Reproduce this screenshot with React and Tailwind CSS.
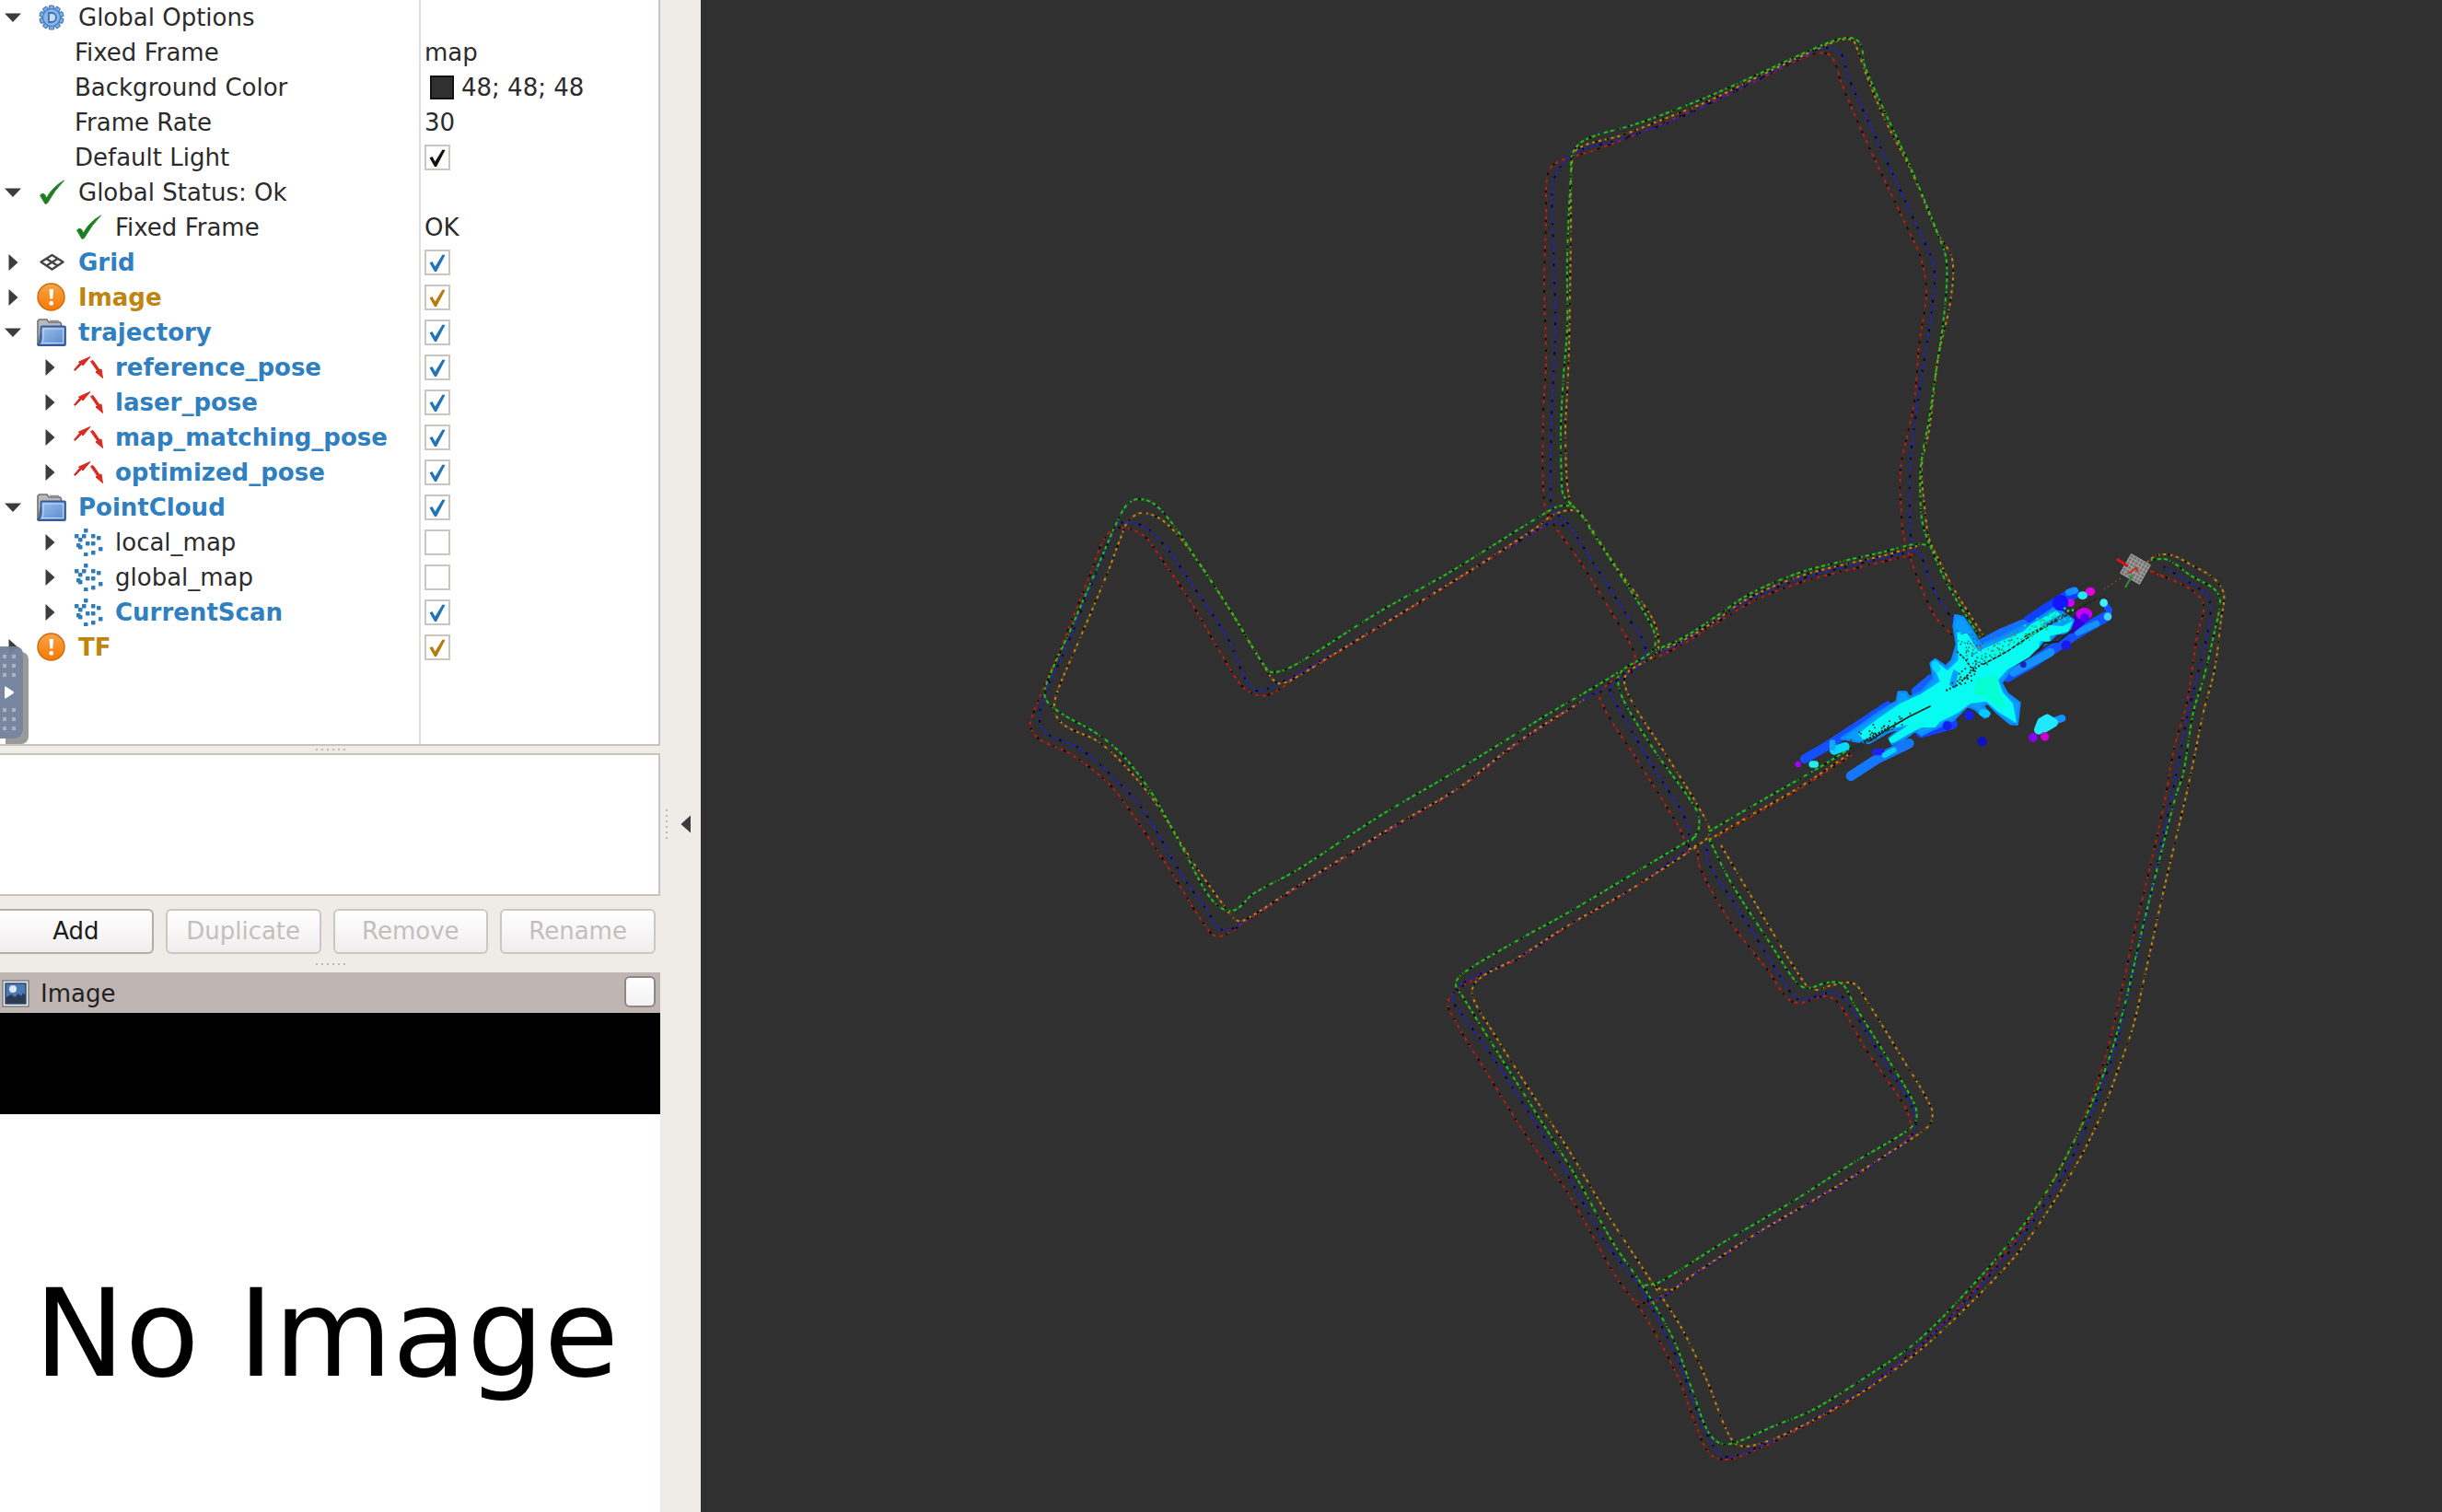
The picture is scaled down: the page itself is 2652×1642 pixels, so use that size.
import React from "react";

/* ---------- tree icons ---------- */

function GearIcon() {
  return (
    <svg viewBox="0 0 28 28" className="size-7" aria-hidden="true">
      <g fill="#7fb0e8" stroke="#4a78b8" strokeWidth="1.2">
        {[0, 36, 72, 108, 144, 180, 216, 252, 288, 324].map((a) => (
          <rect key={a} x="11.5" y="1" width="5" height="6" rx="1" transform={`rotate(${a} 14 14)`} />
        ))}
        <circle cx="14" cy="14" r="9.5" />
      </g>
      <circle cx="14" cy="14" r="8.5" fill="#86b5ec" />
      <path d="M11 9h3a5 5 0 0 1 0 10h-3z" fill="#c4dcf6" stroke="#3f70b4" strokeWidth="1.8" />
    </svg>
  );
}

function TickIcon() {
  return (
    <svg viewBox="0 0 28 28" className="size-7" aria-hidden="true">
      <path d="M1.500 17 Q4 14 6.500 16 L8.500 20 Q15 8 27.500 1 Q17 12 9.500 25.500 L7 26.500 Z" fill="#1f7a24" stroke="#2f8f33" strokeWidth="1" />
    </svg>
  );
}

function GridIcon() {
  return (
    <svg viewBox="0 0 30 22" className="h-[22px] w-[30px]" aria-hidden="true">
      <g fill="none" stroke="#444" strokeWidth="2.400" strokeLinejoin="round">
        <path d="M15.500 3 L27.500 10.500 L15.500 18.500 L3.500 10.500 Z" />
        <path d="M9.500 7 L21.500 14.500 M21.500 7 L9.500 14.500" />
      </g>
    </svg>
  );
}

function WarnIcon() {
  return (
    <svg viewBox="0 0 32 32" className="size-8" aria-hidden="true">
      <defs>
        <linearGradient id="warn" x1="0" y1="0" x2="0" y2="1">
          <stop offset="0" stopColor="#f7a54a" />
          <stop offset="1" stopColor="#f57900" />
        </linearGradient>
      </defs>
      <circle cx="15.500" cy="15.500" r="14.500" fill="url(#warn)" stroke="#cf6a10" strokeWidth="1.5" />
      <path d="M13.500 7h4.500l-0.700 10.500h-3z" fill="#fff" />
      <rect x="13.500" y="20" width="4.500" height="4.500" rx="1.500" fill="#fff" />
    </svg>
  );
}

function FolderIcon() {
  return (
    <svg viewBox="0 0 32 32" className="size-8" aria-hidden="true">
      <defs>
        <linearGradient id="folder" x1="0" y1="0" x2="1" y2="1">
          <stop offset="0" stopColor="#a3c3ec" />
          <stop offset="1" stopColor="#5588d0" />
        </linearGradient>
      </defs>
      <path d="M1 30V3.500L2.500 2H11l2 3h12.500l1 2V14H5z" fill="#b9b9bb" stroke="#6f7175" strokeWidth="1.600" />
      <path d="M14 3.500h9l2 2.500" fill="none" stroke="#8a8c90" strokeWidth="1.400" />
      <path d="M4.500 10.500 Q4.500 9.500 5.500 9.500H30q1 0 1 1V29q0 1-1 1H2q-1 0-.800-1 3-2 3.300-6z" fill="url(#folder)" stroke="#365a98" strokeWidth="1.800" />
      <path d="M7 12h21.500v15.500H5.500q1.500-2 1.500-5z" fill="none" stroke="#c6daf4" strokeWidth="1" />
    </svg>
  );
}

function PoseIcon() {
  return (
    <svg viewBox="0 0 32 26" className="h-[26px] w-8" aria-hidden="true">
      <g fill="#dc2a20" stroke="#dc2a20" strokeWidth="1" strokeLinejoin="round">
        <path d="M0.500 15.500 L6.500 8.500 L5.500 7 L18 1.500 L10 11 L8.500 9.500 L1.500 16.500 Z" />
        <path d="M18.500 6.500 L21 5.500 L28 15.500 L30 15 L31.500 24.500 L24 18 L25.500 16.500 Z" />
      </g>
    </svg>
  );
}

function CloudIcon() {
  const dots = [
    [11, 0], [1, 6], [9, 6], [19, 6], [25, 8], [5, 10], [13, 14], [19, 14], [3, 16],
    [5, 18], [27, 20], [19, 24], [11, 26],
  ];
  return (
    <svg viewBox="0 0 32 30" className="h-[30px] w-8" aria-hidden="true">
      {dots.map(([x, y], i) => (
        <rect key={i} x={x} y={y} width="4.500" height="4.500" rx="0.8" fill="#2e7cc0" />
      ))}
    </svg>
  );
}

function PictureIcon() {
  return (
    <svg viewBox="0 0 30 30" className="size-[30px]" aria-hidden="true">
      <rect x="1" y="1" width="28" height="28" fill="#f4f4f4" stroke="#7d7f82" strokeWidth="1.5" />
      <rect x="4" y="4" width="22" height="22" fill="#4c79b4" stroke="#2f4a70" strokeWidth="1.5" />
      <circle cx="12" cy="10" r="4" fill="#dfeaf6" />
      <path d="M4.500 19 L10 16 L14 19 L18 15 L21 18 L23 14 L25.500 17 V25.500 H4.500Z" fill="#2b3b52" />
    </svg>
  );
}

const ICONS = {
  gear: GearIcon,
  tick: TickIcon,
  grid: GridIcon,
  warn: WarnIcon,
  folder: FolderIcon,
  pose: PoseIcon,
  cloud: CloudIcon,
};

/* ---------- display tree ---------- */

const TONES = {
  plain: "text-[#2b2b2b]",
  blue: "font-bold text-[#2f7fc1]",
  amber: "font-bold text-[#c08411]",
};
const TICK_TONES = { plain: "#111111", blue: "#2273b8", amber: "#b87a0a" };

const ROWS = [
  { label: "Global Options", icon: "gear", open: true },
  { label: "Fixed Frame", prop: true, value: "map" },
  { label: "Background Color", prop: true, value: "48; 48; 48", swatch: true },
  { label: "Frame Rate", prop: true, value: "30" },
  { label: "Default Light", prop: true, check: true },
  { label: "Global Status: Ok", icon: "tick", open: true },
  { label: "Fixed Frame", icon: "tick", child: true, leaf: true, value: "OK" },
  { label: "Grid", icon: "grid", tone: "blue", check: true },
  { label: "Image", icon: "warn", tone: "amber", check: true },
  { label: "trajectory", icon: "folder", tone: "blue", open: true, check: true },
  { label: "reference_pose", icon: "pose", tone: "blue", child: true, check: true },
  { label: "laser_pose", icon: "pose", tone: "blue", child: true, check: true },
  { label: "map_matching_pose", icon: "pose", tone: "blue", child: true, check: true },
  { label: "optimized_pose", icon: "pose", tone: "blue", child: true, check: true },
  { label: "PointCloud", icon: "folder", tone: "blue", open: true, check: true },
  { label: "local_map", icon: "cloud", child: true, check: false },
  { label: "global_map", icon: "cloud", child: true, check: false },
  { label: "CurrentScan", icon: "cloud", tone: "blue", child: true, check: true },
  { label: "TF", icon: "warn", tone: "amber", check: true },
];

function Arrow({ open }) {
  return (
    <svg viewBox="0 0 20 20" className="size-5" aria-hidden="true">
      <path d={open ? "M1 5.500H19L10 15Z" : "M5.500 1V19L15.500 10Z"} fill="#3c3c3c" />
    </svg>
  );
}

function CheckBox({ id, label, checked, tone }) {
  return (
    <span className="relative flex size-7">
      <input
        id={id}
        type="checkbox"
        defaultChecked={checked}
        aria-label={label}
        className="peer size-7 appearance-none border-2 border-[#c9c5c0] bg-white"
      />
      <svg viewBox="0 0 28 28" className="pointer-events-none absolute inset-0 hidden size-7 peer-checked:block" aria-hidden="true">
        <path d="M5.500 14.500 L8.500 13 L11.500 18.500 L19.500 5.500 L22.500 6 L13 24 H11 Z" fill={TICK_TONES[tone]} />
      </svg>
    </span>
  );
}

function TreeRow({ row, index }) {
  const tone = row.tone || "plain";
  const Icon = row.icon ? ICONS[row.icon] : null;
  const id = `prop-${index}`;
  const hasCheck = row.check !== undefined;
  const pad = row.prop ? "pl-20" : row.child ? "pl-10" : "pl-0";
  const text = <span className={`whitespace-nowrap pl-px ${TONES[tone]}`}>{row.label}</span>;
  return (
    <li className="flex h-[38px] items-center">
      <div className={`flex w-[455px] shrink-0 items-center gap-3 ${pad}`}>
        {!row.prop && (
          <span className="flex w-7 shrink-0 justify-center">
            {!row.leaf && (
              <button type="button" aria-label={`Toggle ${row.label}`} className="flex">
                <Arrow open={row.open} />
              </button>
            )}
          </span>
        )}
        {Icon && (
          <span className="flex w-8 shrink-0 justify-center">
            <Icon />
          </span>
        )}
        {hasCheck ? <label htmlFor={id}>{text}</label> : text}
      </div>
      <div className="flex flex-1 items-center gap-2 pl-[6px]">
        {row.swatch && <span className="ml-[6px] size-[26px] border-2 border-[#111] bg-[#303030]" />}
        {row.value && <span className="text-[#2b2b2b]">{row.value}</span>}
        {hasCheck && <CheckBox id={id} label={row.label} checked={row.check} tone={tone} />}
      </div>
    </li>
  );
}

function Grip({ vertical }) {
  return (
    <span className={vertical ? "flex flex-col gap-1" : "flex gap-1"} aria-hidden="true">
      {[0, 1, 2, 3, 4, 5].map((i) => (
        <span key={i} className="size-[2px] bg-[#bdb8b3]" />
      ))}
    </span>
  );
}

function SideHandle() {
  const dots = Array.from({ length: 6 });
  return (
    <button
      type="button"
      aria-label="Show panel"
      className="absolute top-[702px] left-0 flex h-[100px] w-[25px] flex-col items-center justify-center gap-[10px] rounded-r-lg bg-[#71809a]/95 pr-[5px] shadow-[6px_6px_0_#9a9a9a]"
    >
      <span className="grid grid-cols-2 gap-[6px]">
        {dots.map((_, i) => <span key={i} className="size-1 bg-[#a9b3c2]" />)}
      </span>
      <svg viewBox="0 0 12 14" className="h-[14px] w-3" aria-hidden="true">
        <path d="M1 1.500 Q1 0 3 1 L10.500 6 Q12 7 10.500 8 L3 13 Q1 14 1 12.500Z" fill="#fff" />
      </svg>
      <span className="grid grid-cols-2 gap-[6px]">
        {dots.map((_, i) => <span key={i} className="size-1 bg-[#a9b3c2]" />)}
      </span>
    </button>
  );
}

function Sidebar() {
  return (
    <aside className="relative flex w-[717px] shrink-0 flex-col bg-[#efebe7]">
      <section aria-label="Displays" className="relative border-r-2 border-b-2 border-[#c9c3bf] bg-white pb-[86px] text-[26px] leading-[36px]">
        <span className="absolute inset-y-0 left-[455px] w-[2px] bg-[#dedede]" />
        <ul className="relative">
          {ROWS.map((row, i) => <TreeRow key={i} row={row} index={i} />)}
        </ul>
      </section>
      <SideHandle />
      <div className="flex h-2 items-center justify-center"><Grip /></div>
      <section aria-label="Description" className="h-[155px] border-y-2 border-r-2 border-[#c9c3bf] bg-white" />
      <div className="flex gap-[13px] pt-[14px] pr-[5px] text-[26px]">
        {["Add", "Duplicate", "Remove", "Rename"].map((name, i) => (
          <button
            key={name}
            type="button"
            disabled={i > 0}
            className="h-[49px] flex-1 rounded-md border-2 border-[#b3adaa] bg-linear-to-b from-white to-[#f1edee] text-[#1c1c1c] first:rounded-l-none first:border-l-0 disabled:border-[#cdc7c4] disabled:text-[#c3bfbc]"
          >
            {name}
          </button>
        ))}
      </div>
      <div className="flex h-5 items-end justify-center pb-2"><Grip /></div>
      <header className="flex h-11 items-center gap-3 bg-[#bfb5b3] pt-[2px] pr-[5px] pl-[2px] text-[26px] text-[#222]">
        <PictureIcon />
        <h2 className="flex-1">Image</h2>
        <button type="button" aria-label="Close Image" className="mb-1 size-[34px] rounded-md border-2 border-[#8e8785] bg-linear-to-b from-white to-[#f4f2f2]" />
      </header>
      <div className="h-[110px] bg-black" />
      <div className="flex flex-1 items-center justify-center bg-white pt-11 pr-2 text-[132px] leading-none whitespace-nowrap text-black">
        No Image
      </div>
    </aside>
  );
}

/* ---------- 3D view ---------- */

function smooth(points) {
  const p = points.trim().split(/\s+/).map((s) => s.split(",").map(Number));
  let d = `M${p[0][0]} ${p[0][1]}`;
  for (let i = 0; i < p.length - 1; i++) {
    const a = p[i - 1] || p[i];
    const b = p[i];
    const c = p[i + 1];
    const e = p[i + 2] || c;
    const len = Math.hypot(c[0] - b[0], c[1] - b[1]);
    const t1 = Math.hypot(c[0] - a[0], c[1] - a[1]) || 1;
    const t2 = Math.hypot(e[0] - b[0], e[1] - b[1]) || 1;
    const x1 = b[0] + ((c[0] - a[0]) / t1) * len * 0.33;
    const y1 = b[1] + ((c[1] - a[1]) / t1) * len * 0.33;
    const x2 = c[0] - ((e[0] - b[0]) / t2) * len * 0.33;
    const y2 = c[1] - ((e[1] - b[1]) / t2) * len * 0.33;
    d += `C${x1.toFixed(1)} ${y1.toFixed(1)} ${x2.toFixed(1)} ${y2.toFixed(1)} ${c[0]} ${c[1]}`;
  }
  return d;
}

const TRACKS = {
  red: {
    color: "#c41c12",
    dash: "3 5",
    lines: [
      "1832,918 1822,896 1779,827 1737,758 1745,744 1774,722 1774,707 1750,665 1716,610 1687,569 1677,545 1676,447 1679,395 1677,308 1679,237 1680,194 1688,178 1732,163 1789,141 1868,107 1939,72 1968,59 1986,59 1993,69 2000,91 2029,158 2073,251 2085,277 2092,316 2084,376 2079,435 2071,474 2064,510 2065,561 2068,585 2077,613 2086,637 2100,667 2120,690",
      "1716,763 1648,808 1585,856 1507,903 1405,967 1352,1001 1323,1017 1308,1004 1270,944 1231,886 1204,851 1163,819 1129,803 1119,789 1122,775 1139,734 1158,689 1185,621 1199,586 1214,573 1241,581 1260,605 1294,655 1328,713 1352,748 1376,755 1410,734 1449,711 1585,628 1677,571",
      "1832,926 1769,968 1703,1006 1650,1041 1600,1064 1573,1086 1580,1108 1609,1156 1662,1240 1703,1296 1756,1388 1785,1427 1822,1495 1842,1548 1856,1578 1873,1585 1891,1581 1948,1555 2030,1507 2111,1437 2173,1366 2207,1321 2240,1264 2263,1215 2287,1146 2303,1080 2320,1003 2333,950 2350,874 2361,813 2375,763 2386,690 2393,657 2379,640 2336,620",
      "1844,923 1846,942 1879,1001 1920,1054 1942,1085 1956,1089 1981,1082 1997,1090 2026,1139 2067,1199 2075,1221 2071,1238 1997,1288 1907,1341 1826,1394 1793,1415 1777,1413",
      "1795,716 1827,700 1900,655 1954,633 2007,619 2079,602",
      "1866,908 1900,888 1954,857 2011,820",
    ],
  },
  blue: {
    color: "#2020d6",
    dash: "3 4",
    lines: [
      "1834,920 1832,893 1798,837 1750,755 1750,744 1783,720 1786,700 1769,672 1725,603 1703,569 1686,553 1684,538 1685,455 1689,356 1687,269 1686,202 1694,182 1714,164 1754,153 1814,132 1886,98 1971,55 1989,52 2000,59 2007,83 2043,162 2084,251 2100,289 2098,336 2089,395 2080,455 2075,498 2074,554 2077,593 2086,603 2100,640 2123,677",
      "1740,748 1718,761 1648,807 1585,855 1507,902 1405,966 1352,1000 1337,1009 1323,1008 1313,992 1284,951 1241,879 1211,846 1173,813 1139,798 1129,782 1134,755 1158,703 1187,631 1209,579 1216,568 1241,571 1265,593 1294,634 1333,693 1357,745 1371,750 1430,720 1585,627 1677,571 1690,566 1700,573",
      "1834,922 1769,967 1703,1005 1650,1040 1595,1064 1577,1082 1585,1098 1613,1136 1654,1199 1703,1277 1744,1350 1781,1398 1822,1476 1842,1529 1854,1558 1871,1581 1891,1579 1948,1553 2030,1505 2091,1456 2132,1417 2180,1362 2213,1319 2247,1264 2280,1187 2297,1138 2309,1089 2327,1011 2350,905 2361,853 2375,780 2389,723 2400,673 2398,647 2386,638 2346,613",
      "1854,918 1854,935 1887,986 1936,1064 1952,1085 1969,1083 1993,1078 2009,1093 2042,1146 2075,1199 2081,1219 2071,1238 1997,1288 1907,1341 1826,1394 1801,1411 1785,1408",
      "1800,709 1827,697 1900,651 1954,629 2007,615 2079,598",
    ],
  },
  orange: {
    color: "#c8860f",
    dash: "3 4",
    lines: [
      "1707,555 1702,526 1700,467 1702,427 1704,376 1706,253 1707,178 1714,161 1761,147 1800,132 1857,109 1914,81 1993,45 2011,43 2016,51 2029,87 2050,136 2075,184 2104,253 2120,281 2118,328 2105,387 2095,467 2087,506 2090,550 2095,585 2104,605 2122,640 2155,692",
      "1834,923 1856,906 1846,879 1803,810 1774,765 1764,741 1769,729 1798,710 1801,693 1793,669 1754,614 1716,557 1706,554 1687,559 1667,574 1585,627 1449,710 1401,739 1386,741 1371,720 1333,658 1294,600 1265,567 1241,557 1226,565 1219,579 1202,624 1170,700 1147,755 1146,775 1158,789 1192,805 1221,831 1255,872 1294,934 1328,982 1342,999 1352,999 1405,965 1507,901 1585,855 1648,806 1720,760",
      "1842,920 1769,967 1703,1005 1650,1039 1605,1064 1599,1081 1622,1122 1662,1185 1703,1248 1744,1316 1793,1391 1826,1442 1854,1500 1875,1553 1887,1569 1907,1569 1948,1553 2022,1512 2083,1468 2128,1427 2187,1366 2220,1321 2253,1268 2280,1215 2303,1154 2317,1113 2330,1056 2350,966 2375,860 2382,827 2393,773 2405,727 2412,673 2415,645 2404,628 2379,613 2359,603 2343,603 2332,610",
      "1869,918 1895,962 1960,1068 1973,1075 1989,1070 2013,1068 2026,1085 2067,1151 2097,1202 2098,1216 2091,1226 2050,1253 1997,1287 1907,1340 1826,1393 1818,1400 1801,1399 1793,1391",
      "1804,706 1827,696 1860,676 1900,649 1954,626 2007,612 2043,604 2082,593",
      "1856,912 1900,886 1954,855 2011,817",
    ],
  },
  green: {
    color: "#1fc01f",
    dash: "4 3",
    lines: [
      "1711,552 1698,538 1696,522 1695,467 1698,407 1702,356 1702,277 1706,190 1708,166 1723,151 1779,134 1850,107 1904,83 1979,49 2007,41 2020,47 2025,71 2043,113 2075,182 2104,253 2114,285 2111,344 2102,407 2095,455 2086,506 2086,554 2089,573 2095,590 2114,633 2150,692",
      "1837,913 1845,899 1842,879 1798,817 1764,762 1757,738 1763,727 1793,708 1798,693 1788,669 1764,631 1730,579 1711,552 1700,549 1687,552 1575,621 1497,665 1410,720 1386,730 1376,727 1333,658 1299,607 1275,571 1253,547 1236,542 1224,548 1214,565 1187,627 1163,683 1136,744 1136,760 1153,775 1187,794 1211,812 1231,834 1255,868 1289,930 1316,977 1338,989 1362,970 1410,944 1497,887 1570,844 1648,796 1682,775 1725,750 1745,738 1759,729",
      "1842,908 1785,942 1703,991 1654,1018 1593,1054 1581,1068 1589,1083 1622,1136 1662,1199 1711,1277 1752,1350 1785,1398 1818,1456 1838,1510 1854,1553 1867,1567 1883,1567 1928,1548 1969,1531 2030,1493 2083,1456 2143,1395 2177,1356 2213,1309 2243,1258 2273,1195 2293,1142 2308,1089 2327,1007 2343,942 2363,864 2371,840 2382,773 2393,737 2404,690 2411,653 2405,640 2379,625 2354,608 2334,608",
      "1856,911 1879,957 1924,1027 1952,1068 1964,1073 1985,1067 2001,1069 2013,1090 2054,1156 2079,1199 2081,1216 2071,1228 2009,1265 1948,1304 1867,1352 1801,1393 1785,1396",
      "1798,706 1827,693 1860,672 1900,645 1954,622 2007,608 2043,600 2079,591 2095,592",
      "1856,903 1900,877 1968,838 2011,812",
    ],
  },
};

function Tracks() {
  return Object.entries(TRACKS).map(([name, track]) => (
    <g key={name} fill="none" strokeWidth="2">
      {track.lines.map((line, i) => {
        const d = smooth(line);
        return (
          <g key={i}>
            <path d={d} stroke={track.color} strokeWidth="3" opacity="0.1" />
            <path d={d} stroke={track.color} strokeDasharray={track.dash} />
            <path d={d} stroke="#0a0a0a" strokeDasharray="3 10 2 17" strokeDashoffset={i * 3} />
          </g>
        );
      })}
    </g>
  ));
}

function seeded(seed) {
  let s = seed;
  return () => {
    s = (s * 16807) % 2147483647;
    return s / 2147483647;
  };
}

function scatter(seed, count, x1, y1, x2, y2, spread) {
  const rnd = seeded(seed);
  return Array.from({ length: count }, () => {
    const t = rnd();
    return [x1 + (x2 - x1) * t + (rnd() - 0.5) * spread, y1 + (y2 - y1) * t + (rnd() - 0.5) * spread];
  });
}

function Dots({ points, size, fill }) {
  return points.map(([x, y], i) => (
    <circle key={i} cx={x.toFixed(0)} cy={y.toFixed(0)} r={size} fill={fill} />
  ));
}

function Scan() {
  return (
    <svg x="1940" y="620" width="360" height="240" viewBox="0 0 1080 720" overflow="visible">
      <g fill="none" strokeLinecap="round" strokeLinejoin="round">
        <path d="M60 612 L130 572 L240 500 L330 440" stroke="#1450ff" strokeWidth="30" />
        <path d="M210 668 L300 610 L400 562" stroke="#1478ff" strokeWidth="32" />
        <path d="M290 590 L310 590" stroke="#2020f0" strokeWidth="22" />
        <path d="M790 165 L850 125 L935 72" stroke="#1040ff" strokeWidth="40" />
        <path d="M720 345 L800 300 L890 240 L960 195 L1040 150" stroke="#1450ff" strokeWidth="34" />
        <path d="M740 330 L860 265" stroke="#1490ff" strokeWidth="28" />
        <path d="M950 200 L1010 172" stroke="#1490ff" strokeWidth="22" />
        <path d="M925 185 L955 160" stroke="#3000d8" strokeWidth="40" />
        <path d="M1034 104 L1052 128 L1046 148" stroke="#1450ff" strokeWidth="20" />
        <path d="M640 240 L700 208 L770 178" stroke="#1470ff" strokeWidth="40" />
        <path d="M420 392 L470 350" stroke="#1460ff" strokeWidth="26" />
        <path d="M440 526 L540 498" stroke="#1440ff" strokeWidth="36" />
      </g>
      <path
        d="M550 145 L575 150 L600 185 L632 240 L700 215 L770 180 L800 170 L870 122 L900 135 L935 160 L920 200 L880 205 L850 235 L800 260 L740 310 L700 365 L720 400 L760 430 L752 500 L730 498 L690 465 L655 430 L640 440 L662 465 L645 478 L615 450 L590 440 L545 485 L480 515 L440 535 L420 520 L380 550 L345 565 L335 545 L380 510 L330 525 L270 560 L225 555 L180 545 L240 505 L300 462 L360 425 L365 395 L390 395 L400 412 L440 395 L480 350 L470 300 L485 288 L520 312 L540 290 L555 240 L545 180 Z"
        fill="#0a9cff"
        stroke="#0a8cff"
        strokeWidth="8"
        strokeLinejoin="round"
      />
      <path
        d="M556 200 L590 205 L625 262 L700 228 L770 198 L800 172 L880 130 L892 142 L830 175 L900 180 L935 162 L918 198 L858 212 L860 232 L828 228 L822 250 L790 282 L720 322 L690 355 L705 395 L738 432 L750 496 L690 460 L650 425 L600 432 L560 462 L500 492 L485 510 L440 510 L400 530 L350 560 L345 540 L400 500 L340 515 L300 535 L250 550 L235 530 L300 480 L370 432 L440 400 L500 360 L478 305 L490 296 L525 325 L560 290 Z"
        fill="#08fbf2"
      />
      <path d="M620 350 L690 340 L690 390 L715 440 L690 440 L650 410 L610 400 Z" fill="#08ffc8" opacity="0.8" />
      <path d="M530 370 L545 320 L560 330 L550 385 Z" fill="#0a9cff" />
      <g fill="none" strokeLinecap="round" strokeLinejoin="round">
        <path d="M155 585 L192 572" stroke="#08d8ff" strokeWidth="28" />
        <path d="M84 630 L94 630" stroke="#20f0f0" strokeWidth="22" />
        <path d="M150 560 L150 575" stroke="#14a8ff" strokeWidth="20" />
        <path d="M345 550 L400 512 L440 500" stroke="#08f8f0" strokeWidth="20" />
        <path d="M320 600 L350 584" stroke="#08d0ff" strokeWidth="18" />
        <path d="M870 490 L898 480" stroke="#1490ff" strokeWidth="24" />
        <path d="M822 518 L832 492 L850 482 L870 494 L840 512" stroke="#20e8ff" strokeWidth="30" />
        <path d="M920 70 L940 64" stroke="#1490ff" strokeWidth="22" />
        <path d="M485 305 L490 318" stroke="#08d8ff" strokeWidth="26" />
        <path d="M640 462 L652 466" stroke="#08c8ff" strokeWidth="24" />
      </g>
      <g>
        <circle cx="38" cy="630" r="10" fill="#a000ff" />
        <ellipse cx="990" cy="67" rx="16" ry="14" fill="#e000e0" />
        <circle cx="926" cy="104" r="13" fill="#d000f0" />
        <circle cx="893" cy="104" r="26" fill="#1414ff" />
        <ellipse cx="970" cy="140" rx="27" ry="20" fill="#c800f0" />
        <circle cx="972" cy="154" r="15" fill="#5000f0" />
        <ellipse cx="965" cy="80" rx="16" ry="13" fill="#20e8ff" />
        <circle cx="1034" cy="104" r="13" fill="#40f0ff" />
        <circle cx="1047" cy="149" r="13" fill="#40d0ff" />
        <circle cx="595" cy="470" r="16" fill="#1420f0" />
        <circle cx="524" cy="504" r="15" fill="#1420f0" />
        <circle cx="638" cy="556" r="16" fill="#1010c0" />
        <circle cx="804" cy="543" r="15" fill="#8800f0" />
        <circle cx="842" cy="540" r="14" fill="#d000d0" />
        <circle cx="912" cy="242" r="16" fill="#1818e8" />
        <circle cx="772" cy="305" r="10" fill="#2020c8" />
      </g>
      <g fill="none" stroke="#1c2420" strokeWidth="5">
        <path d="M640 305 L720 262 L775 225 L830 190 L930 135 L1010 90" strokeDasharray="14 4" />
        <path d="M775 215 L850 175 L940 120 L990 85" stroke="#3b3a10" strokeDasharray="9 5" />
        <path d="M820 262 L840 235 L885 230 L935 190" strokeWidth="7" />
        <path d="M470 440 L400 475 L330 515 L270 555" />
        <path d="M335 512 L270 548 L205 588" strokeWidth="12" strokeDasharray="7 4" stroke="#20302c" />
        <path d="M520 390 L560 370 L600 330 L640 300" strokeWidth="6" strokeDasharray="6 6" />
        <path d="M555 262 L585 290 L605 320" strokeDasharray="8 5" />
      </g>
      <Dots points={scatter(7, 46, 570, 220, 640, 290, 60)} size={2.5} fill="#0b5a70" />
      <Dots points={scatter(11, 40, 640, 285, 770, 210, 50)} size={2.5} fill="#0c8a3c" />
      <Dots points={scatter(23, 26, 560, 370, 620, 310, 40)} size={3} fill="#20302c" />
      <Dots points={scatter(31, 34, 230, 555, 390, 480, 44)} size={3} fill="#253a38" />
      <Dots points={scatter(43, 20, 600, 270, 760, 200, 40)} size={2.5} fill="#c05a20" />
      <Dots points={scatter(53, 30, 780, 200, 930, 130, 44)} size={4} fill="#10d89a" />
    </svg>
  );
}

function GridMarker() {
  const steps = [-12, -8, -4, 0, 4, 8, 12];
  return (
    <g transform="translate(2319 618)">
      <g transform="rotate(30)">
        <rect x="-12" y="-12" width="24" height="24" fill="#8c8c8c" opacity="0.75" />
        {steps.map((s) => (
          <path key={s} d={`M${s} -12V12M-12 ${s}H12`} stroke="#a4a4a4" strokeWidth="1" />
        ))}
      </g>
      <path d="M-20 -11 L-8 -3" stroke="#d41414" strokeWidth="3" />
      <path d="M-8 5 L2 -2 M0 -2 L3 3" stroke="#c8301c" strokeWidth="2" />
      <path d="M-11 20 L-3 6" stroke="#2f8f2f" strokeWidth="2" />
      <path d="M16 2 L34 10" stroke="#c41c12" strokeWidth="2" strokeDasharray="3 4" />
      <path d="M-16 10 L-34 22" stroke="#5a5030" strokeWidth="2" strokeDasharray="2 3" />
    </g>
  );
}

function Viewport() {
  return (
    <main className="flex min-w-0 flex-1 bg-[#303030]">
      <svg viewBox="761 0 1891 1642" className="w-full min-w-0 flex-1" role="img" aria-label="Vehicle trajectories and current laser scan">
        <Tracks />
        <Scan />
        <GridMarker />
      </svg>
    </main>
  );
}

export default function App() {
  return (
    <div className="flex min-h-screen bg-[#efebe7] font-['DejaVu_Sans',sans-serif]">
      <Sidebar />
      <div className="flex w-11 shrink-0 items-center gap-[14px] pt-[148px] pl-[6px]">
        <Grip vertical />
        <button type="button" aria-label="Collapse displays panel" className="flex">
          <svg viewBox="0 0 12 20" className="h-5 w-3" aria-hidden="true">
            <path d="M11 0.500V19.500L0.500 10Z" fill="#3c3c3c" />
          </svg>
        </button>
      </div>
      <Viewport />
    </div>
  );
}
